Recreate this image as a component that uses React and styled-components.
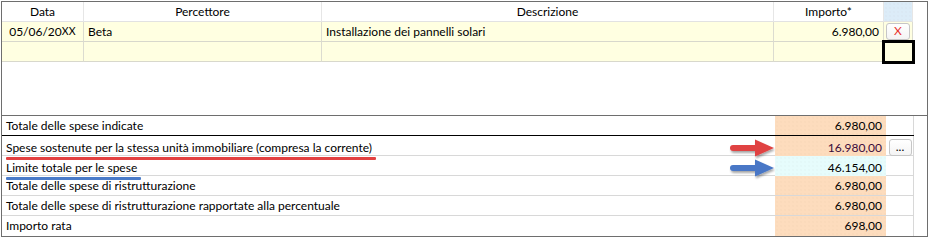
import React from 'react';
import styled, { createGlobalStyle } from 'styled-components';

const GlobalStyle = createGlobalStyle`
  html, body {
    margin: 0;
    padding: 0;
    background: #fff;
  }
  body {
    font-family: "Segoe UI", Lato, "Noto Sans", sans-serif;
    font-size: 12px;
    color: #000;
  }
`;

const dots = `radial-gradient(rgba(120, 90, 60, 0.02) 0.7px, transparent 0.9px)`;

const Frame = styled.div`
  box-sizing: border-box;
  margin: 1px 0 0 1px;
  width: 927px;
  height: 236px;
  border: 1px solid #6e6e6e;
  display: flex;
  flex-direction: column;
`;

const TopSection = styled.div`
  height: 113px;
  border-bottom: 1px solid #6e6e6e;
`;

const EntryGrid = styled.div`
  display: grid;
  grid-template-columns: 82px 238px 452px 110px 29px;
  grid-auto-rows: 20px;
`;

const HeadCell = styled.div`
  box-sizing: border-box;
  display: flex;
  align-items: center;
  justify-content: center;
  border-right: 1px solid #e6e6e6;
  border-bottom: 1px solid #e2e2e2;
  background: ${({ $blue }) => ($blue ? '#dcecf8' : '#fff')};
  background-image: ${({ $blue }) => ($blue ? dots : 'none')};
  background-size: 4px 4px;
  padding-bottom: 1px;
`;

const Cell = styled.div`
  box-sizing: border-box;
  position: relative;
  display: flex;
  align-items: center;
  justify-content: ${({ $align }) =>
    $align === 'center' ? 'center' : $align === 'right' ? 'flex-end' : 'flex-start'};
  padding: 0 4px 1px;
  background: #ffffe1;
  border-right: 1px solid #dcdcd0;
  border-bottom: 1px solid #d8d8cc;
  white-space: nowrap;
  ${({ $focus }) => ($focus ? 'outline: 3px solid #000; outline-offset: -1px; z-index: 1;' : '')}
`;

const Small = styled.span`
  font-size: 10.5px;
  letter-spacing: 0.2px;
`;

const MiniButton = styled.button`
  box-sizing: border-box;
  width: ${({ $w }) => $w}px;
  height: 17px;
  margin: 0;
  padding: 0 0 2px;
  border: 1px solid #c6c6c6;
  border-radius: 3px;
  background: linear-gradient(#ffffff, #f4f4f4);
  font-family: inherit;
  font-size: 12px;
  line-height: 12px;
  color: ${({ $red }) => ($red ? '#e8332f' : '#000')};
`;

const SummaryList = styled.div`
  display: flex;
  flex-direction: column;
`;

const SummaryRow = styled.div`
  display: grid;
  grid-template-columns: 773px 111px 28px;
  height: 20px;
  box-sizing: border-box;
  border-bottom: 1px solid ${({ $strong }) => ($strong ? '#000' : '#d8d8d8')};
  width: 912px;

  &:last-child {
    border-bottom: none;
  }
`;

const Label = styled.div`
  display: flex;
  align-items: center;
  justify-content: space-between;
  padding-left: 4px;
  padding-bottom: 1px;
  white-space: nowrap;
`;

const LabelText = styled.span`
  position: relative;

  &::after {
    content: '';
    display: ${({ $mark }) => ($mark ? 'block' : 'none')};
    position: absolute;
    left: 0;
    right: -4px;
    bottom: -5px;
    height: 3px;
    border-radius: 1px;
    background: ${({ $mark }) => ($mark === 'red' ? '#e34141' : '#4a7bc9')};
  }
`;

const Value = styled.div`
  display: flex;
  align-items: center;
  justify-content: flex-end;
  padding: 0 4px 1px 0;
  background-color: ${({ $tone }) => ($tone === 'cyan' ? '#e6fcfc' : '#fddcbd')};
  background-image: ${dots};
  background-size: 4px 4px;
  color: ${({ $dark }) => ($dark ? '#3a0b3a' : '#000')};
`;

const Side = styled.div`
  display: flex;
  align-items: center;
  justify-content: center;
  border-right: 1px solid #d8d8d8;
  padding-left: 1px;
`;

const Arrow = ({ color }) => (
  <svg width="46" height="20" viewBox="0 0 46 20" style={{ overflow: 'visible', marginTop: 2 }}>
    <defs>
      <filter id={`sh-${color}`} x="-20%" y="-40%" width="140%" height="190%">
        <feDropShadow dx="1" dy="2" stdDeviation="1.2" floodColor="#000" floodOpacity="0.35" />
      </filter>
    </defs>
    <g filter={`url(#sh-${color})`} fill={color}>
      <path d="M4 7 H28 V13 H4 A3 3 0 0 1 4 7 Z" />
      <path d="M26 1.5 L45 10 L26 18.5 Z" />
    </g>
  </svg>
);

const summary = [
  { label: 'Totale delle spese indicate', value: '6.980,00', strong: true },
  {
    label: 'Spese sostenute per la stessa unità immobiliare (compresa la corrente)',
    value: '16.980,00',
    mark: 'red',
    arrow: '#e04343',
    button: true,
    dark: true,
  },
  { label: 'Limite totale per le spese', value: '46.154,00', mark: 'blue', arrow: '#4877c6', tone: 'cyan' },
  { label: 'Totale delle spese di ristrutturazione', value: '6.980,00' },
  { label: 'Totale delle spese di ristrutturazione rapportate alla percentuale', value: '6.980,00' },
  { label: 'Importo rata', value: '698,00' },
];

export default function App() {
  return (
    <>
      <GlobalStyle />
      <Frame>
        <TopSection>
          <EntryGrid>
            <HeadCell>Data</HeadCell>
            <HeadCell>Percettore</HeadCell>
            <HeadCell>Descrizione</HeadCell>
            <HeadCell>Importo*</HeadCell>
            <HeadCell $blue />

            <Cell $align="center">
              05/06/20<Small>XX</Small>
            </Cell>
            <Cell>Beta</Cell>
            <Cell>Installazione dei pannelli solari</Cell>
            <Cell $align="right">6.980,00</Cell>
            <Cell $align="center" style={{ padding: 0 }}>
              <MiniButton $w={24} $red>
                X
              </MiniButton>
            </Cell>

            <Cell />
            <Cell />
            <Cell />
            <Cell />
            <Cell $focus />
          </EntryGrid>
        </TopSection>

        <SummaryList>
          {summary.map((row) => (
            <SummaryRow key={row.label} $strong={row.strong}>
              <Label>
                <LabelText $mark={row.mark}>{row.label}</LabelText>
                {row.arrow && <Arrow color={row.arrow} />}
              </Label>
              <Value $tone={row.tone} $dark={row.dark}>
                {row.value}
              </Value>
              <Side>{row.button && <MiniButton $w={23}>...</MiniButton>}</Side>
            </SummaryRow>
          ))}
        </SummaryList>
      </Frame>
    </>
  );
}
